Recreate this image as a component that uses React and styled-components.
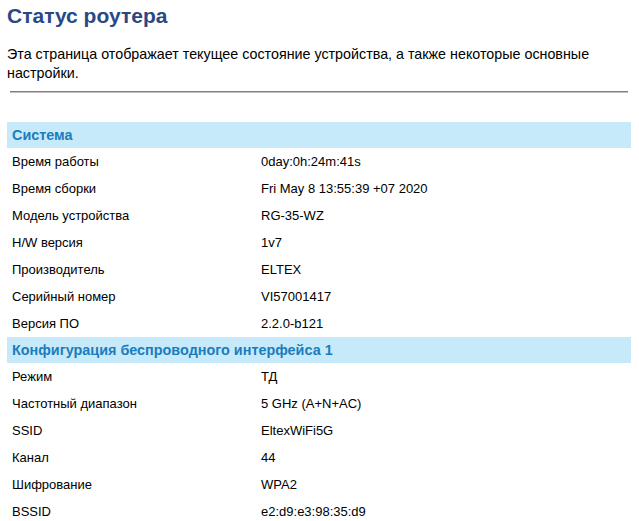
import React from 'react';
import styled, { createGlobalStyle } from 'styled-components';

const GlobalStyle = createGlobalStyle`
  body {
    margin: 0;
    background: #fff;
    font-family: "Liberation Sans", Arial, sans-serif;
  }
`;

const Page = styled.div`
  padding: 0 8px 0 7px;
`;

const Title = styled.h1`
  margin: 0;
  padding-top: 4px;
  font-size: 21px;
  line-height: 24px;
  font-weight: bold;
  color: #2b4886;
`;

const Intro = styled.p`
  margin: 17px 0 0;
  font-size: 14.3px;
  line-height: 19px;
  color: #000;
`;

const Divider = styled.hr`
  margin: 8px 3px 0;
  border: 0;
  border-top: 1px solid #808080;
  border-bottom: 1px solid #c0c0c0;
`;

const Table = styled.table`
  width: 100%;
  margin-top: 29px;
  border-collapse: collapse;
  table-layout: fixed;
  font-size: 13px;
`;

const LabelCol = styled.col`
  width: 249px;
`;

const HeadCell = styled.th`
  background: #c6eaf9;
  color: #1b7cbd;
  font-size: 14.4px;
  font-weight: bold;
  text-align: left;
  height: 26px;
  padding: 0 5px;
`;

const Cell = styled.td`
  height: 27px;
  padding: 0 5px;
  color: #000;
`;

const sections = [
  {
    title: 'Система',
    rows: [
      ['Время работы', '0day:0h:24m:41s'],
      ['Время сборки', 'Fri May 8 13:55:39 +07 2020'],
      ['Модель устройства', 'RG-35-WZ'],
      ['H/W версия', '1v7'],
      ['Производитель', 'ELTEX'],
      ['Серийный номер', 'VI57001417'],
      ['Версия ПО', '2.2.0-b121'],
    ],
  },
  {
    title: 'Конфигурация беспроводного интерфейса 1',
    rows: [
      ['Режим', 'ТД'],
      ['Частотный диапазон', '5 GHz (A+N+AC)'],
      ['SSID', 'EltexWiFi5G'],
      ['Канал', '44'],
      ['Шифрование', 'WPA2'],
      ['BSSID', 'e2:d9:e3:98:35:d9'],
    ],
  },
];

export default function App() {
  return (
    <>
      <GlobalStyle />
      <Page>
        <Title>Статус роутера</Title>
        <Intro>
          Эта страница отображает текущее состояние устройства, а также некоторые основные
          настройки.
        </Intro>
        <Divider />
        <Table>
          <colgroup>
            <LabelCol />
            <col />
          </colgroup>
          {sections.map(s => (
            <tbody key={s.title}>
              <tr>
                <HeadCell colSpan={2}>{s.title}</HeadCell>
              </tr>
              {s.rows.map(([k, v]) => (
                <tr key={k}>
                  <Cell>{k}</Cell>
                  <Cell>{v}</Cell>
                </tr>
              ))}
            </tbody>
          ))}
        </Table>
      </Page>
    </>
  );
}
